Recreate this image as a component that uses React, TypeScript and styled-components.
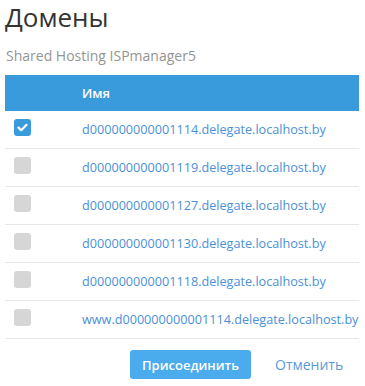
import React from 'react';
import styled, { createGlobalStyle } from 'styled-components';

const GlobalStyle = createGlobalStyle`
    body {
        margin: 0;
        background: #ffffff;
        font-family: 'Open Sans', sans-serif;
    }
`;

const Page = styled.div`
    width: 354px;
    padding: 0 6px 0 5px;
`;

const Title = styled.h1`
    margin: 0;
    padding-top: 1px;
    font-size: 26px;
    font-weight: 400;
    line-height: 32px;
    color: #333333;
`;

const Subtitle = styled.div`
    margin-top: 13px;
    font-size: 14px;
    line-height: 19px;
    color: #949494;
    padding-left: 1px;
`;

const Table = styled.div`
    margin-top: 10px;
    display: flex;
    flex-direction: column;
`;

const HeaderRow = styled.div`
    display: flex;
    align-items: center;
    height: 36px;
    background: #3a9bdc;
    color: #ffffff;
    font-size: 13px;
    font-weight: 600;
`;

const Row = styled.div`
    display: flex;
    align-items: center;
    height: 37px;
    border-bottom: 1px solid #e6e6e6;
`;

const CheckCell = styled.div`
    flex-shrink: 0;
    width: 77px;
    padding-left: 9px;
    display: flex;
    align-items: center;
    box-sizing: border-box;
    margin-top: -4px;
`;

const Checkbox = styled.div<{ $checked?: boolean }>`
    width: 17px;
    height: 17px;
    border-radius: 3px;
    background: ${(p) => (p.$checked ? '#3a9bdc' : '#d6d6d6')};
    display: flex;
    align-items: center;
    justify-content: center;
`;

const NameCell = styled.div`
    font-size: 13px;
    white-space: nowrap;
`;

const DomainLink = styled.a`
    color: #4a90d9;
    text-decoration: none;
    font-size: 12.65px;
    white-space: nowrap;
    margin-top: -2px;
`;

const Footer = styled.div`
    display: flex;
    align-items: center;
    padding-left: 125px;
    margin-top: 11px;
    gap: 24px;
`;

const PrimaryButton = styled.button`
    width: 121px;
    height: 29px;
    border: none;
    border-radius: 3px;
    background: #4aabed;
    color: #ffffff;
    font-family: 'Open Sans', sans-serif;
    font-size: 13px;
    font-weight: 600;
    padding: 0;
`;

const CancelLink = styled.a`
    color: #5a9bd8;
    font-size: 14px;
    text-decoration: none;
`;

const domains = [
    'd000000000001114.delegate.localhost.by',
    'd000000000001119.delegate.localhost.by',
    'd000000000001127.delegate.localhost.by',
    'd000000000001130.delegate.localhost.by',
    'd000000000001118.delegate.localhost.by',
    'www.d000000000001114.delegate.localhost.by',
];

const Check = () => (
    <svg width="11" height="9" viewBox="0 0 11 9">
        <path d="M1.5 4.6 L4.2 7.2 L9.5 1.8" fill="none" stroke="#ffffff" strokeWidth="2.2" strokeLinecap="round" strokeLinejoin="round" />
    </svg>
);

const App = () => {
    return (
        <Page>
            <GlobalStyle />
            <Title>Домены</Title>
            <Subtitle>Shared Hosting ISPmanager5</Subtitle>
            <Table>
                <HeaderRow>
                    <CheckCell />
                    <NameCell>Имя</NameCell>
                </HeaderRow>
                {domains.map((d, i) => (
                    <Row key={d}>
                        <CheckCell>
                            <Checkbox $checked={i === 0}>{i === 0 && <Check />}</Checkbox>
                        </CheckCell>
                        <DomainLink href="#">{d}</DomainLink>
                    </Row>
                ))}
            </Table>
            <Footer>
                <PrimaryButton>Присоединить</PrimaryButton>
                <CancelLink href="#">Отменить</CancelLink>
            </Footer>
        </Page>
    );
};

export default App;
